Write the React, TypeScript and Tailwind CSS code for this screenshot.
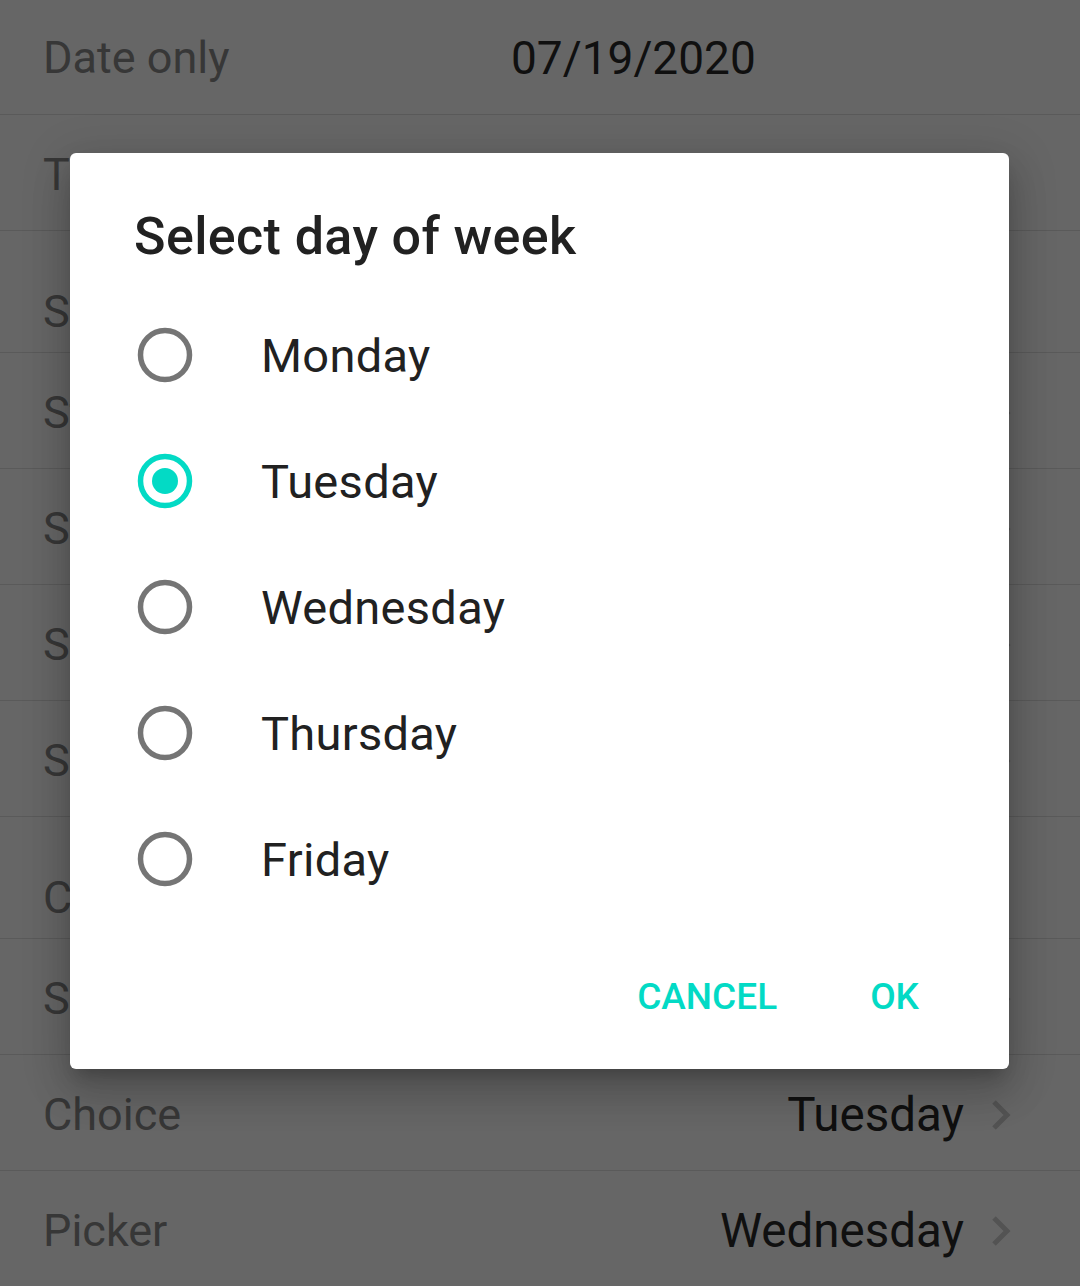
import { useState } from "react";

type Row = {
  label: string;
  value?: string;
  chevron?: boolean;
  tall?: boolean;
  valueAt?: boolean;
};

const rows: Row[] = [
  { label: "Date only", value: "07/19/2020", valueAt: true },
  { label: "Time only" },
  { label: "Slider", tall: true },
  { label: "Stepper", chevron: true },
  { label: "Switch", chevron: true },
  { label: "Segments", chevron: true },
  { label: "Spinner", chevron: true },
  { label: "Checkbox", tall: true },
  { label: "Select", chevron: true },
  { label: "Choice", value: "Tuesday", chevron: true },
  { label: "Picker", value: "Wednesday", chevron: true },
];

const days = ["Monday", "Tuesday", "Wednesday", "Thursday", "Friday"];

function Chevron() {
  return (
    <svg width="20" height="32" viewBox="0 0 20 32" className="shrink-0">
      <polyline points="3,3 16,16 3,29" fill="none" stroke="#cfcfcf" strokeWidth="5" />
    </svg>
  );
}

function Radio({ checked }: { checked: boolean }) {
  return (
    <svg width="56" height="56" viewBox="0 0 56 56" className="shrink-0">
      <circle cx="28" cy="28" r="24.5" fill="none" stroke={checked ? "#03dac5" : "#757575"} strokeWidth="5.5" />
      {checked ? <circle cx="28" cy="28" r="13" fill="#03dac5" /> : null}
    </svg>
  );
}

export default function App() {
  const [selected, setSelected] = useState("Tuesday");

  return (
    <div className="relative h-[1286px] w-[1080px] overflow-hidden bg-white font-['Roboto',sans-serif]">
      <div className="flex flex-col">
        {rows.map((row, i) => (
          <div
            key={row.label}
            className={
              (row.tall ? "h-[122px] pt-[40px] " : i === 0 ? "h-[115px] pt-[2px] " : "h-[116px] pt-[4px] ") +
              "flex items-center border-b border-[#e1e1e1] pl-[43px] pr-[69px] text-[45px] leading-[54px]"
            }
          >
            <span className={row.valueAt ? "w-[468px] text-[#8a8a8a]" : "flex-1 text-[#8a8a8a]"}>{row.label}</span>
            {row.value ? (
              <span className={row.valueAt ? "text-[46px] text-[#2a2a2a]" : "mr-[27px] text-[47.5px] text-[#2a2a2a]"}>
                {row.value}
              </span>
            ) : null}
            {row.chevron ? <Chevron /> : null}
          </div>
        ))}
      </div>

      <div className="absolute inset-0 bg-black/60 pl-[70px] pt-[153px]">
        <div className="h-[916px] w-[939px] rounded-[6px] bg-white pt-[54px] shadow-[0_24px_38px_3px_rgba(0,0,0,0.14),0_9px_46px_8px_rgba(0,0,0,0.12),0_11px_15px_-7px_rgba(0,0,0,0.2)]">
          <h2 className="pl-[64px] text-[52px] font-medium leading-[60px] tracking-[0.4px] text-[#212121]">
            Select day of week
          </h2>
          <div className="mt-[25px] flex flex-col">
            {days.map((day) => (
              <div
                key={day}
                onClick={() => setSelected(day)}
                className="flex h-[126px] cursor-pointer items-center gap-[68px] pl-[67px]"
              >
                <Radio checked={selected === day} />
                <span className="pt-[2px] text-[47px] leading-[56px] tracking-[0.3px] text-[#212121]">{day}</span>
              </div>
            ))}
          </div>
          <div className="mt-[26px] flex h-[98px] items-center justify-end gap-[93px] pr-[90px] text-[37px] font-medium text-[#03dac5]">
            <button type="button">CANCEL</button>
            <button type="button">OK</button>
          </div>
        </div>
      </div>
    </div>
  );
}
